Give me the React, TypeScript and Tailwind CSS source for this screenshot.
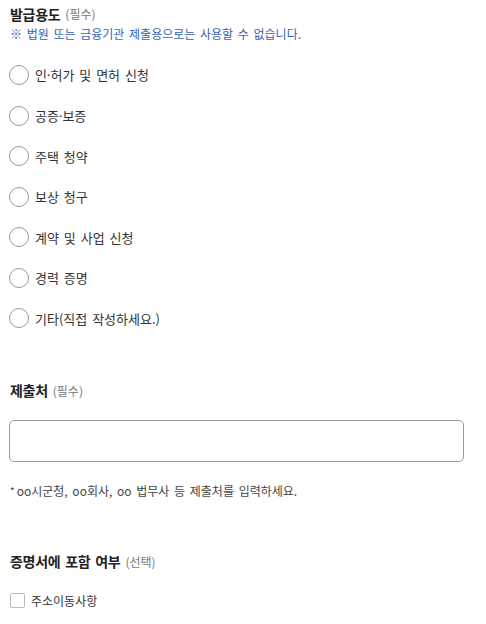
const font = { fontFamily: '"Noto Sans CJK KR", "Noto Sans", sans-serif' }

const purposes = [
  ['인', '허가 및 면허 신청'],
  ['공증', '보증'],
  ['주택 청약'],
  ['보상 청구'],
  ['계약 및 사업 신청'],
  ['경력 증명'],
  ['기타(직접 작성하세요.)'],
]

function Title({ label, tag }: { label: string; tag: string }) {
  return (
    <div className="flex items-center h-[20px] [word-spacing:2px]">
      <span className="text-[14px] font-bold text-[#222] tracking-[-0.3px]">{label}</span>
      <span className="ml-[5px] text-[12px] text-[#777]">{tag}</span>
    </div>
  )
}

export default function App() {
  return (
    <div className="bg-white w-[486px] h-[624px] overflow-hidden px-[10px] pt-[4px]" style={font}>
      <Title label="발급용도" tag="(필수)" />
      <p className="mt-[1px] h-[18px] leading-[18px] text-[12px] text-[#3463b6] [word-spacing:2px]">
        ※ 법원 또는 금융기관 제출용으로는 사용할 수 없습니다.
      </p>
      <div className="mt-[12px] flex flex-col">
        {purposes.map((p) => (
          <label key={p.join()} className="flex items-center h-[40.5px]">
            <span className="w-[20px] h-[20px] -ml-[1px] rounded-full border border-[#999] bg-white" />
            <span className="ml-[6px] text-[13px] text-[#333] [word-spacing:2px]">
              {p[0]}
              {p.length > 1 && (
                <>
                  <span className="font-['Noto_Sans']">·</span>
                  {p[1]}
                </>
              )}
            </span>
          </label>
        ))}
      </div>

      <div className="mt-[42px]">
        <Title label="제출처" tag="(필수)" />
      </div>
      <input
        className="mt-[19px] block w-[455px] -ml-[1px] h-[42px] rounded-[5px] border border-[#999] outline-none px-3"
        type="text"
      />
      <p className="mt-[20px] h-[18px] leading-[18px] text-[12px] text-[#444] [word-spacing:2px]">
        <span className="text-[10px] align-top mr-[2px]">*</span>oo시군청, oo회사, oo 법무사 등 제출처를 입력하세요.
      </p>

      <div className="mt-[52px]">
        <Title label="증명서에 포함 여부" tag="(선택)" />
      </div>
      <label className="mt-[21px] flex items-center h-[16px]">
        <span className="w-[15px] h-[15px] rounded-[2px] border border-[#bbb] bg-white" />
        <span className="ml-[6px] text-[12px] text-[#333]">주소이동사항</span>
      </label>
    </div>
  )
}
